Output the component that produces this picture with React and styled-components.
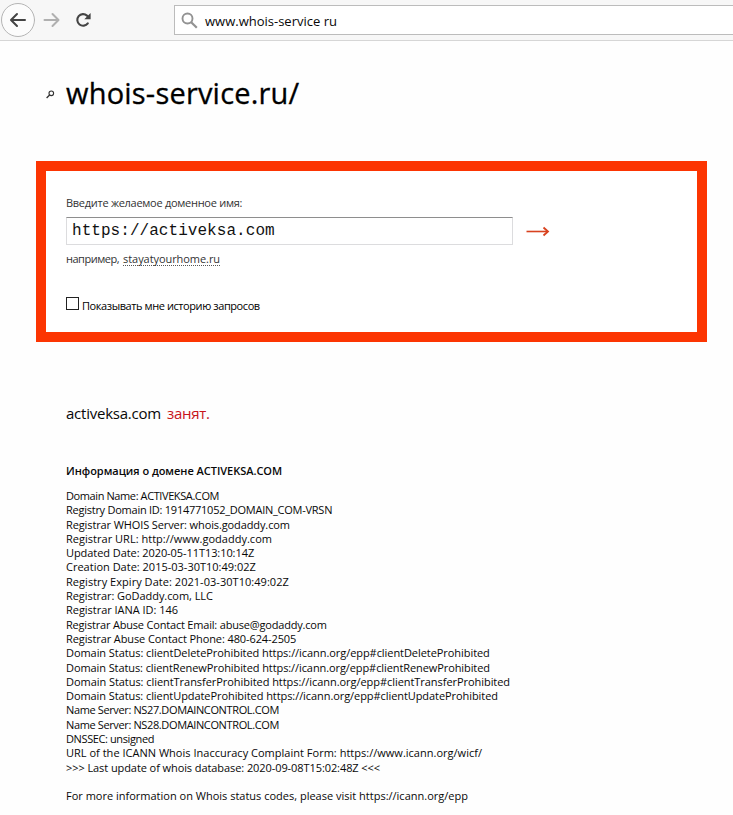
import React, { useState } from 'react'
import styled, { createGlobalStyle } from 'styled-components'

const GlobalStyle = createGlobalStyle`
  body {
    margin: 0;
    background: #fefefe;
    color: #080808;
    font-family: "Open Sans", "Noto Sans", sans-serif;
    font-size: 11px;
  }
`;

const Page = styled.div`
  height: 815px;
  overflow: hidden;
`;

const Toolbar = styled.div`
  display: flex;
  align-items: center;
  box-sizing: border-box;
  height: 41px;
  background: #f7f7f7;
  border-bottom: 1px solid #d6d6d6;
`;

const NavIcons = styled.div`
  width: 174px;
  height: 40px;
  flex-shrink: 0;
`;

const AddressBar = styled.div`
  flex: 1;
  display: flex;
  align-items: center;
  box-sizing: border-box;
  height: 30px;
  padding-left: 6px;
  gap: 7px;
  background: #fff;
  border: 1px solid #bcbcbc;
  border-right: none;
  font-size: 13px;
`;

const Address = styled.span`
  line-height: 20px;
  padding-top: 2px;
`;

const Main = styled.main`
  padding: 32px 26px 0 36px;
`;

const Header = styled.header`
  display: flex;
  align-items: center;
  height: 40px;
`;

const Logo = styled.svg`
  margin: 2px 11px 0 10px;
`;

const Title = styled.h1`
  margin: 0;
  font-size: 29px;
  font-weight: 400;
  line-height: 40px;
  letter-spacing: 0.2px;
  color: #000;
  -webkit-text-stroke: 0.3px #000;
`;

const SearchBox = styled.form`
  box-sizing: border-box;
  height: 181px;
  margin-top: 48px;
  padding: 25px 20px 0;
  border: 10px solid #fc3502;
  background: #fff;
`;

const Text = styled.span`
  letter-spacing: ${({ $spacing }) => $spacing || 0}px;
`;

const Label = styled.label`
  display: block;
  line-height: 14px;
  color: #333;
`;

const InputRow = styled.div`
  display: flex;
  align-items: center;
  gap: 13px;
  margin-top: 7px;
`;

const DomainInput = styled.input`
  box-sizing: border-box;
  width: 447px;
  height: 28px;
  padding: 0 5px;
  border: 1px solid #dcdcde;
  border-top-color: #8e8e8e;
  background: #fff;
  color: #111;
  font-family: "Liberation Mono", monospace;
  font-size: 16px;
  letter-spacing: 0.05px;
  outline: none;
`;

const Example = styled.div`
  margin-top: 7px;
  line-height: 14px;
  color: #333;
`;

const ExampleLink = styled.a`
  display: inline-block;
  line-height: 12px;
  margin-left: 4px;
  letter-spacing: -0.06px;
  border-bottom: 1px dotted #555;
`;

const CheckRow = styled.label`
  display: flex;
  gap: 3px;
  margin-top: 31px;
  color: #000;
`;

const Checkbox = styled.input`
  appearance: none;
  box-sizing: border-box;
  width: 13px;
  height: 13px;
  margin: 0;
  border: 1px solid #222;
  background: ${({ checked }) => (checked ? '#222' : '#fff')};
`;

const CheckText = styled.span`
  margin-top: 2px;
  line-height: 14px;
  letter-spacing: -0.42px;
`;

const Result = styled.section`
  padding: 61px 30px 0;
`;

const Status = styled.div`
  font-size: 15px;
  line-height: 20px;
  letter-spacing: -0.23px;
`;

const Taken = styled.span`
  margin-left: 6px;
  letter-spacing: -0.3px;
  color: #c8141b;
`;

const InfoTitle = styled.h2`
  margin: 41px 0 11px;
  font-size: 11px;
  font-weight: 600;
  line-height: 14px;
  letter-spacing: -0.03px;
`;

const InfoLine = styled.div`
  height: 14.3px;
  line-height: 14.3px;
  white-space: nowrap;
  letter-spacing: ${({ $spacing }) => $spacing}px;
`;

const whois = [
  { text: 'Domain Name: ACTIVEKSA.COM', spacing: -0.4 },
  { text: 'Registry Domain ID: 1914771052_DOMAIN_COM-VRSN', spacing: -0.25 },
  { text: 'Registrar WHOIS Server: whois.godaddy.com', spacing: -0.11 },
  { text: 'Registrar URL: http://www.godaddy.com', spacing: 0.02 },
  { text: 'Updated Date: 2020-05-11T13:10:14Z', spacing: -0.07 },
  { text: 'Creation Date: 2015-03-30T10:49:02Z', spacing: 0 },
  { text: 'Registry Expiry Date: 2021-03-30T10:49:02Z', spacing: 0.04 },
  { text: 'Registrar: GoDaddy.com, LLC', spacing: -0.06 },
  { text: 'Registrar IANA ID: 146', spacing: -0.03 },
  { text: 'Registrar Abuse Contact Email: abuse@godaddy.com', spacing: -0.19 },
  { text: 'Registrar Abuse Contact Phone: 480-624-2505', spacing: -0.1 },
  { text: 'Domain Status: clientDeleteProhibited https://icann.org/epp#clientDeleteProhibited', spacing: -0.06 },
  { text: 'Domain Status: clientRenewProhibited https://icann.org/epp#clientRenewProhibited', spacing: -0.09 },
  { text: 'Domain Status: clientTransferProhibited https://icann.org/epp#clientTransferProhibited', spacing: -0.05 },
  { text: 'Domain Status: clientUpdateProhibited https://icann.org/epp#clientUpdateProhibited', spacing: -0.07 },
  { text: 'Name Server: NS27.DOMAINCONTROL.COM', spacing: -0.37 },
  { text: 'Name Server: NS28.DOMAINCONTROL.COM', spacing: -0.37 },
  { text: 'DNSSEC: unsigned', spacing: -0.39 },
  { text: 'URL of the ICANN Whois Inaccuracy Complaint Form: https://www.icann.org/wicf/', spacing: 0.015 },
  { text: '>>> Last update of whois database: 2020-09-08T15:02:48Z <<<', spacing: -0.08 },
  { text: '', spacing: 0 },
  { text: 'For more information on Whois status codes, please visit https://icann.org/epp', spacing: 0 },
]

const BrowserBar = () => (
  <Toolbar>
    <NavIcons>
      <svg width="174" height="40" fill="none" strokeLinecap="round" strokeLinejoin="round">
        <circle cx="18" cy="20" r="16.5" fill="#fcfcfc" stroke="#b5b5b5" />
        <path d="M25 20H11.5M17 14l-6 6 6 6" stroke="#444" strokeWidth="2" />
        <path d="M44.5 20H58M52.5 14l6 6-6 6" stroke="#b0b0b0" strokeWidth="2" />
        <path d="M87.8 23.3A5.8 5.8 0 1 1 87 15.6L88.5 17.2" stroke="#444" strokeWidth="2.1" />
        <path d="M90.6 13v6.3h-6.3z" fill="#444" />
      </svg>
    </NavIcons>
    <AddressBar>
      <svg width="17" height="17" fill="none" stroke="#929292">
        <circle cx="6.5" cy="6.5" r="5" strokeWidth="1.9" />
        <path d="M10.2 10.2L15.8 15.8" strokeWidth="2.2" />
      </svg>
      <Address>www.whois-service ru</Address>
    </AddressBar>
  </Toolbar>
)

const App = () => {
  const [domain, setDomain] = useState('https://activeksa.com')
  const [history, setHistory] = useState(false)

  return (
    <Page>
      <GlobalStyle />
      <BrowserBar />
      <Main>
        <Header>
          <Logo width="9" height="9" fill="none" stroke="#333">
            <circle cx="5.3" cy="3.3" r="2.3" strokeWidth="1.1" />
            <path d="M3.6 5L.6 8" strokeWidth="1.3" />
          </Logo>
          <Title>whois-service.ru/</Title>
        </Header>
        <SearchBox onSubmit={(e) => e.preventDefault()}>
          <Label htmlFor="domain">
            <Text $spacing={-0.28}>Введите желаемое доменное имя:</Text>
          </Label>
          <InputRow>
            <DomainInput
              id="domain"
              spellCheck={false}
              value={domain}
              onChange={(e) => setDomain(e.target.value)}
            />
            <svg width="24" height="12" fill="none" stroke="#d8421f">
              <path d="M.5 6.5H21" strokeWidth="1.6" />
              <path d="M17.5 2.5l4.5 4-4.5 4" strokeWidth="1.8" />
            </svg>
          </InputRow>
          <Example>
            <Text $spacing={-0.49}>например,</Text>
            <ExampleLink>stayatyourhome.ru</ExampleLink>
          </Example>
          <CheckRow>
            <Checkbox type="checkbox" checked={history} onChange={() => setHistory(!history)} />
            <CheckText>Показывать мне историю запросов</CheckText>
          </CheckRow>
        </SearchBox>
        <Result>
          <Status>
            activeksa.com<Taken>занят.</Taken>
          </Status>
          <InfoTitle>Информация о домене ACTIVEKSA.COM</InfoTitle>
          {whois.map((line, i) => (
            <InfoLine key={i} $spacing={line.spacing}>{line.text}</InfoLine>
          ))}
        </Result>
      </Main>
    </Page>
  )
}

export default App
